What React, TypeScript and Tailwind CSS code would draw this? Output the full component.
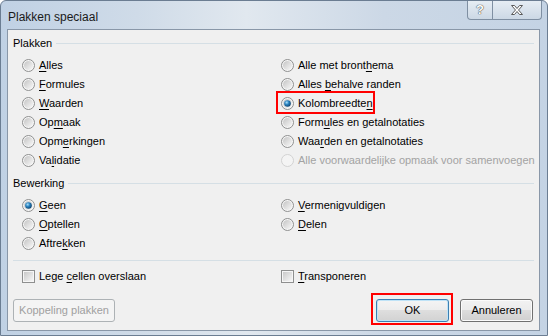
import React from "react";

const font = { fontFamily: '"Liberation Sans", Arial, sans-serif' };

function Radio({ checked = false, disabled = false }: { checked?: boolean; disabled?: boolean }) {
  return (
    <svg width="13" height="13" viewBox="0 0 13 13" className="shrink-0">
      <defs>
        <linearGradient id="rin" x1="0" y1="0" x2="1" y2="1">
          <stop offset="0" stopColor="#c4c4c4" />
          <stop offset="1" stopColor="#f8f8f8" />
        </linearGradient>
        <radialGradient id="rdot" cx="0.38" cy="0.35" r="0.7">
          <stop offset="0" stopColor="#a9e0fb" />
          <stop offset="0.45" stopColor="#2a82bf" />
          <stop offset="1" stopColor="#0b3f6a" />
        </radialGradient>
      </defs>
      {disabled ? (
        <circle cx="6.5" cy="6.5" r="6" fill="#f4f4f4" stroke="#d2d2d2" />
      ) : (
        <>
          <circle cx="6.5" cy="6.5" r="6" fill="#f6f6f6" stroke="#8e8f8f" />
          <circle cx="6.5" cy="6.5" r="4.5" fill="url(#rin)" />
          {checked && <circle cx="6.5" cy="6.5" r="3.3" fill="url(#rdot)" />}
        </>
      )}
    </svg>
  );
}

function Check() {
  return (
    <svg width="13" height="13" viewBox="0 0 13 13" className="shrink-0">
      <defs>
        <linearGradient id="cin" x1="0" y1="0" x2="1" y2="1">
          <stop offset="0" stopColor="#c9c9c9" />
          <stop offset="1" stopColor="#f6f6f6" />
        </linearGradient>
      </defs>
      <rect x="0.5" y="0.5" width="12" height="12" fill="#f6f6f6" stroke="#8e8f8f" />
      <rect x="2" y="2" width="9" height="9" fill="url(#cin)" />
    </svg>
  );
}

// k = index of the access-key letter
function Label({ t, k, disabled }: { t: string; k?: number; disabled?: boolean }) {
  if (k === undefined) return <span className={disabled ? "text-[#a3a3a3]" : ""}>{t}</span>;
  return (
    <span>
      {t.slice(0, k)}
      <u className="underline-offset-[2px]">{t[k]}</u>
      {t.slice(k + 1)}
    </span>
  );
}

function Option({ t, k, checked, disabled, box }: { t: string; k?: number; checked?: boolean; disabled?: boolean; box?: boolean }) {
  return (
    <div className="flex h-[19px] items-center gap-[4px]">
      {box ? <Check /> : <Radio checked={checked} disabled={disabled} />}
      <Label t={t} k={k} disabled={disabled} />
    </div>
  );
}

function Header({ t }: { t: string }) {
  return (
    <div className="ml-[5px] mr-[5px] flex h-[16px] items-center gap-[4px]">
      <span>{t}</span>
      <div className="h-px flex-1 bg-[#d5dfe5]" />
    </div>
  );
}

export default function App() {
  return (
    <div
      style={font}
      className="relative h-[336px] w-[548px] overflow-hidden rounded-t-[6px] border border-[#6b7d92] bg-[linear-gradient(90deg,#c0d1e4_0%,#cfdbe8_25%,#e1e8ef_45%,#ccd8e6_70%,#c4d3e4_100%)] text-[11px] text-black"
    >
      {/* title bar */}
      <div className="flex h-[28px] justify-between">
        <div className="pl-[7px] pt-[7px] text-[12px] text-[#1a1a1a]">Plakken speciaal</div>
        <div className="mr-[5px] flex h-[19px]">
          <div className="flex w-[26px] items-center justify-center rounded-bl-[4px] border border-t-0 border-[#7f8fa2] bg-[linear-gradient(#e6edf4,#ccd8e5)] text-[13px] font-bold text-white [text-shadow:0_0_1px_#333,0_0_1px_#333]">
            ?
          </div>
          <div className="flex w-[49px] items-center justify-center rounded-br-[4px] border border-l-0 border-t-0 border-[#7f8fa2] bg-[linear-gradient(#e6edf4,#ccd8e5)]">
            <svg width="14" height="12" viewBox="0 0 14 12">
              <path
                d="M1.5 1.5h3l2.5 3 2.5-3h3l-4 4.5 4 4.5h-3l-2.5-3-2.5 3h-3l4-4.5z"
                fill="#fff"
                stroke="#5a5a5a"
                strokeWidth="1"
                strokeLinejoin="round"
              />
            </svg>
          </div>
        </div>
      </div>

      {/* client area */}
      <div className="ml-[6px] h-[302px] w-[533px] border border-[#8997a8] bg-[#f0f0f0]">
        <div className="pt-[5px]">
          <Header t="Plakken" />
          <div className="mt-[5px] grid grid-cols-[259px_1fr] pl-[14px]">
            <div className="flex flex-col">
              <Option t="Alles" k={0} />
              <Option t="Formules" k={0} />
              <Option t="Waarden" k={0} />
              <Option t="Opmaak" k={2} />
              <Option t="Opmerkingen" k={3} />
              <Option t="Validatie" k={2} />
            </div>
            <div className="flex flex-col">
              <Option t="Alle met bronthema" k={14} />
              <Option t="Alles behalve randen" k={6} />
              <div className="relative">
                <Option t="Kolombreedten" k={12} checked />
                <div className="absolute left-[-5px] top-[-3px] h-[23px] w-[99px] border-2 border-[#ff0000]" />
              </div>
              <Option t="Formules en getalnotaties" k={4} />
              <Option t="Waarden en getalnotaties" k={3} />
              <Option t="Alle voorwaardelijke opmaak voor samenvoegen" disabled />
            </div>
          </div>

          <div className="mt-[5px]">
            <Header t="Bewerking" />
          </div>
          <div className="mt-[5px] grid grid-cols-[259px_1fr] pl-[14px]">
            <div className="flex flex-col">
              <Option t="Geen" k={0} checked />
              <Option t="Optellen" k={0} />
              <Option t="Aftrekken" k={5} />
            </div>
            <div className="flex flex-col">
              <Option t="Vermenigvuldigen" k={0} />
              <Option t="Delen" k={0} />
            </div>
          </div>

          <div className="ml-[5px] mr-[5px] mt-[7px] h-px bg-[#d5dfe5]" />

          <div className="mt-[6px] grid grid-cols-[259px_1fr] pl-[14px]">
            <Option t="Lege cellen overslaan" k={5} box />
            <Option t="Transponeren" k={0} box />
          </div>

          <div className="mt-[13px] flex items-center pl-[5px] pr-[6px]">
            <div className="flex h-[23px] w-[102px] items-center justify-center rounded-[3px] border border-[#adb2b5] bg-[#f4f4f4] text-[#a0a0a0]">
              Koppeling plakken
            </div>
            <div className="flex-1" />
            <div className="relative">
              <div className="flex h-[23px] w-[73px] items-center justify-center rounded-[3px] border border-[#3c7fb1] bg-[linear-gradient(#f4f4f4_0%,#ececec_50%,#dedede_50%,#d2d2d2_100%)] shadow-[inset_0_0_0_1px_#bfe3f7]">
                OK
              </div>
              <div className="absolute left-[-5px] top-[-6px] h-[32px] w-[82px] border-2 border-[#ff0000]" />
            </div>
            <div className="ml-[11px] flex h-[23px] w-[73px] items-center justify-center rounded-[3px] border border-[#707070] bg-[linear-gradient(#f2f2f2_0%,#ebebeb_50%,#dddddd_50%,#cfcfcf_100%)] shadow-[inset_0_0_0_1px_#fbfbfb]">
              Annuleren
            </div>
          </div>
        </div>
      </div>
    </div>
  );
}
